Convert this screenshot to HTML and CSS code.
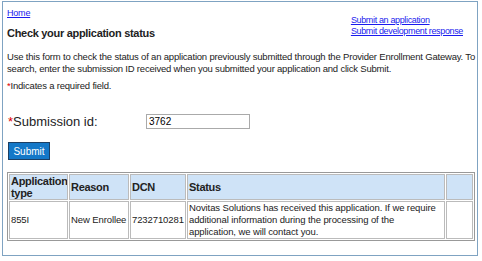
FILE: index.html
```html
<!DOCTYPE html>
<html lang="en">
<head>
    <meta charset="UTF-8">
    <title>Check your application status</title>
    <link rel="stylesheet" href="styles.css">
</head>
<body>
    <div class="page">
        <div class="top-row">
            <div class="crumbs"><a href="#">Home</a></div>
            <div class="side-links">
                <a href="#">Submit an application</a>
                <a href="#">Submit development response</a>
            </div>
        </div>
        <h1>Check your application status</h1>
        <p class="intro">Use this form to check the status of an application previously submitted through the Provider Enrollment Gateway. To search, enter the submission ID received when you submitted your application and click Submit.</p>
        <p class="req-note"><span class="star">*</span>Indicates a required field.</p>

        <form class="lookup">
            <div class="field-row">
                <label for="subid"><span class="star">*</span>Submission id:</label>
                <input type="text" id="subid" value="3762">
            </div>
            <button type="submit" class="submit-btn">Submit</button>
        </form>

        <table class="results">
            <tr>
                <th class="c-type">Application type</th>
                <th class="c-reason">Reason</th>
                <th class="c-dcn">DCN</th>
                <th class="c-status">Status</th>
                <th class="c-extra"></th>
            </tr>
            <tr>
                <td>855I</td>
                <td>New Enrollee</td>
                <td>7232710281</td>
                <td>Novitas Solutions has received this application. If we require additional information during the processing of the application, we will contact you.</td>
                <td></td>
            </tr>
        </table>
    </div>
</body>
</html>
```

FILE: styles.css
```css
/* Basic styling */
body {
    font-family: "Liberation Sans", Arial, sans-serif;
    font-size: 9.5px;
    letter-spacing: -0.2px;
    color: #222;
    background-color: #fff;
    margin: 0;
    padding: 1px 4px 0 2px;
}

a {
    color: #1a1aee;
}

.page {
    border: 1px solid #7fa3c2;
    height: 255px;
    padding: 0 2px 0 4px;
    box-sizing: border-box;
}

.top-row {
    display: flex;
    justify-content: space-between;
    padding-top: 6px;
}

.crumbs {
    font-size: 9px;
}

.side-links {
    display: flex;
    flex-direction: column;
    margin-top: 7px;
    margin-right: 12px;
    font-size: 9px;
    letter-spacing: -0.35px;
    line-height: 11px;
}

h1 {
    font-size: 11px;
    font-weight: bold;
    letter-spacing: -0.3px;
    margin: -11px 0 0;
    line-height: 14px;
}

.intro {
    margin: 11px 0 0;
    line-height: 12px;
    text-align: justify;
}

.req-note {
    margin: 5px 0 0;
}

.star {
    color: #d00;
}

.field-row {
    display: flex;
    align-items: center;
    margin-top: 23px;
}

.field-row label {
    width: 138px;
    font-size: 13px;
    letter-spacing: 0;
    padding-left: 1px;
}

.field-row input {
    width: 98px;
    height: 13px;
    padding: 0 2px;
    border: 1px solid #aaa;
    font-family: inherit;
    font-size: 10px;
}

.submit-btn {
    margin: 13px 0 0 1px;
    width: 42px;
    height: 18px;
    padding: 0;
    background-color: #1478c8;
    color: #fff;
    border: 1px solid #1d3f63;
    font-family: inherit;
    font-size: 10px;
}

.results {
    margin-top: 12px;
    width: 468px;
    border: 1px solid #999;
    border-collapse: separate;
    border-spacing: 1px;
    table-layout: fixed;
}

.results th, .results td {
    border: 1px solid #bbb;
    padding: 0 1px;
    vertical-align: middle;
    text-align: left;
    overflow: hidden;
}

.results th {
    background-color: #cfe3f7;
    font-size: 11px;
    letter-spacing: -0.3px;
    line-height: 12px;
    height: 22px;
}

.results td {
    height: 36px;
    font-size: 9.5px;
    letter-spacing: -0.1px;
    line-height: 12px;
}

.c-type { width: 55px; }
.c-reason { width: 56px; }
.c-dcn { width: 52px; }
.c-extra { width: 23px; }
```
